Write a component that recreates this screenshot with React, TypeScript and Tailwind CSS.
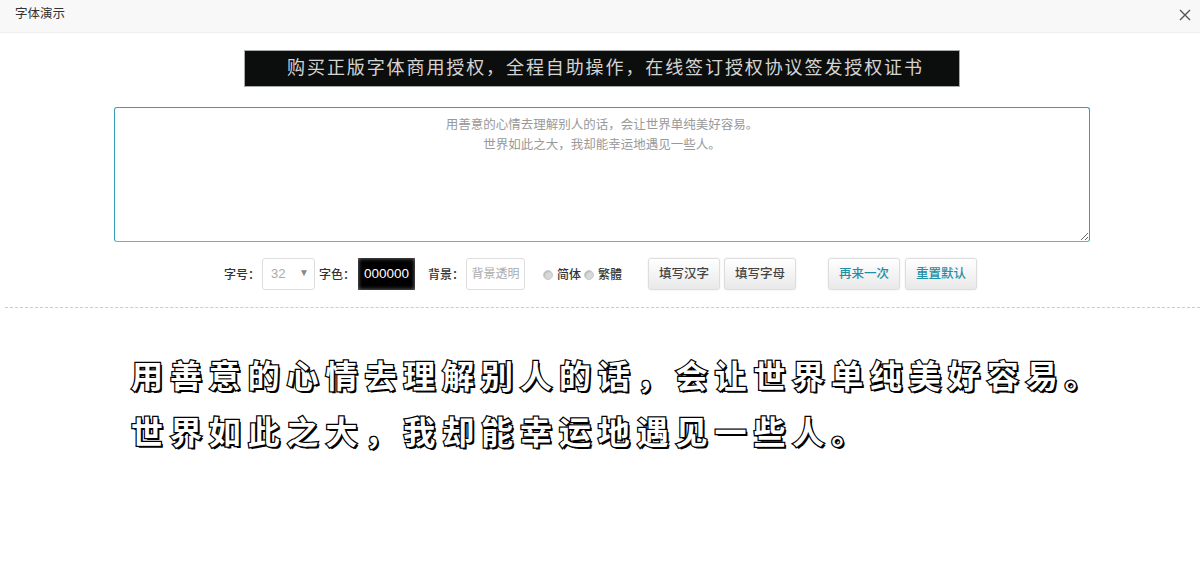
const fontStack = "font-['Liberation_Sans','Noto_Sans_CJK_SC',sans-serif]"

function ToolButton({ label, accent }: { label: string; accent?: boolean }) {
  return (
    <button
      className={`h-8 w-[72px] rounded-[3px] border border-[#ddd] bg-gradient-to-b from-white to-[#e9e9e9] text-[12.5px] font-medium shadow-[0_0_2px_rgba(0,0,0,0.1)] ${
        accent ? 'text-[#1f8fa5]' : 'text-[#444]'
      }`}
    >
      {label}
    </button>
  )
}

function Radio() {
  return <span className="h-2.5 w-2.5 shrink-0 rounded-full border border-[#ccc] bg-[#d8d8d8] shadow-[inset_1px_1px_1px_rgba(0,0,0,0.15)]" />
}

export default function App() {
  return (
    <div className={`h-[562px] w-[1200px] overflow-hidden bg-white ${fontStack}`}>
      {/* Title bar */}
      <div className="flex h-[33px] items-start justify-between border-b border-[#eee] bg-[#f8f8f8] pl-[15px] pr-[9px]">
        <span className="pt-[6px] text-[12.5px] leading-[16px] text-[#333]">字体演示</span>
        <svg width="12" height="12" viewBox="0 0 12 12" className="mt-[9px] text-[#555]">
          <path d="M1 1l10 10M11 1L1 11" stroke="currentColor" strokeWidth="1.4" fill="none" />
        </svg>
      </div>

      {/* Banner */}
      <div className="flex justify-center pl-[3px] pt-[17px]">
        <div className="flex h-[37px] w-[716px] items-center justify-center border border-[#aaa] bg-[#0c0e0d] pl-[8px] text-[18px] tracking-[1.9px] text-[#d4d4d4]">
          购买正版字体商用授权，全程自助操作，在线签订授权协议签发授权证书
        </div>
      </div>

      {/* Input */}
      <div className="flex justify-center pl-[4px] pt-[20px]">
        <textarea
          readOnly
          className="h-[135px] w-[976px] rounded-[3px] border border-[#3a9cb3] border-b-[#62b3c6] px-2 pt-[7px] text-center text-[12.5px] leading-[20px] text-[#999] outline-none"
          defaultValue={'用善意的心情去理解别人的话，会让世界单纯美好容易。\n世界如此之大，我却能幸运地遇见一些人。'}
        />
      </div>

      {/* Controls */}
      <div className="mt-4 flex h-8 items-center pl-[224px] text-xs text-[#333]">
        <span className="w-[38px] pt-px font-medium">字号：</span>
        <div className="relative h-8 w-[53px] rounded-[3px] border border-[#ddd] pl-[8px] text-[13px] leading-[30px] text-[#aaa]">
          32
          <span className="absolute right-[5px] top-[8px] text-[10px] leading-[12px] text-[#888]">▼</span>
        </div>
        <span className="ml-1 w-[39px] pt-px font-medium">字色：</span>
        <div className="flex h-8 w-[57px] items-center justify-center bg-black text-[13.5px] text-white shadow-[inset_0_0_4px_#888]">
          000000
        </div>
        <span className="ml-[13px] w-[38px] pt-px font-medium">背景：</span>
        <div className="h-8 w-[59px] rounded-[3px] border border-[#ddd] text-center text-xs leading-[30px] text-[#aaa]">
          背景透明
        </div>
        <div className="ml-[18px] flex items-center gap-1 pt-px">
          <Radio />
          <span className="font-medium">简体</span>
        </div>
        <div className="ml-[3px] flex items-center gap-1 pt-px">
          <Radio />
          <span className="font-medium">繁體</span>
        </div>
        <div className="ml-[26px] flex gap-1">
          <ToolButton label="填写汉字" />
          <ToolButton label="填写字母" />
        </div>
        <div className="ml-8 flex gap-[5px]">
          <ToolButton label="再来一次" accent />
          <ToolButton label="重置默认" accent />
        </div>
      </div>

      {/* Divider */}
      <div className="ml-[5px] mt-[17px] border-t border-dashed border-[#ccc]" />

      {/* Preview */}
      <div className="pl-[131px] pt-[41px] text-[32px] font-bold leading-[56px] tracking-[6.9px] text-white [-webkit-text-stroke:2.5px_#000] [paint-order:stroke_fill] [text-shadow:2px_2px_0_#000]">
        <div className="whitespace-nowrap">用善意的心情去理解别人的话，会让世界单纯美好容易。</div>
        <div className="whitespace-nowrap">世界如此之大，我却能幸运地遇见一些人。</div>
      </div>
    </div>
  )
}
